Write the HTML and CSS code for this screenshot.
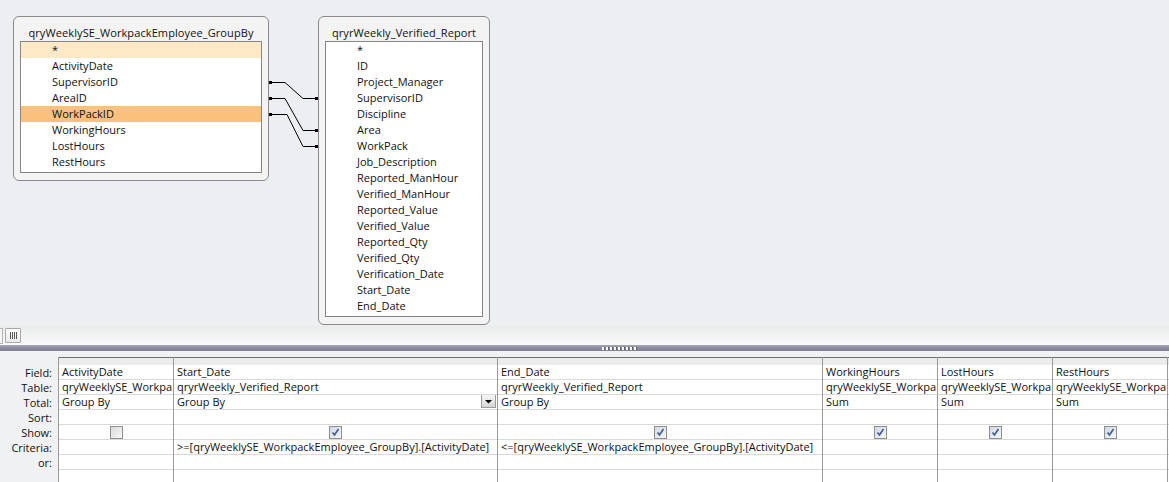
FILE: index.html
```html
<!DOCTYPE html>
<html lang="en">
<head>
    <meta charset="UTF-8">
    <title>Query Design</title>
    <link rel="stylesheet" href="styles.css">
</head>
<body>
    <div class="app">
        <!-- table diagram -->
        <div class="design">
            <div class="field-list left-list">
                <div class="list-title">qryWeeklySE_WorkpackEmployee_GroupBy</div>
                <ul class="fields">
                    <li class="star">*</li>
                    <li>ActivityDate</li>
                    <li>SupervisorID</li>
                    <li>AreaID</li>
                    <li class="selected">WorkPackID</li>
                    <li>WorkingHours</li>
                    <li>LostHours</li>
                    <li>RestHours</li>
                </ul>
            </div>

            <div class="field-list right-list">
                <div class="list-title">qryrWeekly_Verified_Report</div>
                <ul class="fields">
                    <li>*</li>
                    <li>ID</li>
                    <li>Project_Manager</li>
                    <li>SupervisorID</li>
                    <li>Discipline</li>
                    <li>Area</li>
                    <li>WorkPack</li>
                    <li>Job_Description</li>
                    <li>Reported_ManHour</li>
                    <li>Verified_ManHour</li>
                    <li>Reported_Value</li>
                    <li>Verified_Value</li>
                    <li>Reported_Qty</li>
                    <li>Verified_Qty</li>
                    <li>Verification_Date</li>
                    <li>Start_Date</li>
                    <li>End_Date</li>
                </ul>
            </div>

            <svg class="joins" width="1169" height="326" viewBox="0 0 1169 326">
                <g fill="none" stroke="#000" stroke-width="1">
                    <path d="M269 82.5 H285 L303 98.5 H318"/>
                    <path d="M269 98.5 H285 L303 130.5 H318"/>
                    <path d="M269 114.5 H287 L303 146.5 H318"/>
                </g>
                <g fill="#000">
                    <rect x="269" y="81" width="3" height="3"/>
                    <rect x="269" y="97" width="3" height="3"/>
                    <rect x="269" y="113" width="3" height="3"/>
                    <rect x="315" y="97" width="3" height="3"/>
                    <rect x="315" y="129" width="3" height="3"/>
                    <rect x="315" y="145" width="3" height="3"/>
                </g>
            </svg>
        </div>

        <div class="hscroll">
            <span class="stub"></span>
            <span class="thumb"><i></i><i></i><i></i><i></i></span>
        </div>

        <div class="splitter"><span class="grip"></span></div>

        <!-- design grid -->
        <div class="grid-pane">
            <div class="labels">
                <div class="head"></div>
                <div class="lbl">Field:</div>
                <div class="lbl">Table:</div>
                <div class="lbl">Total:</div>
                <div class="lbl">Sort:</div>
                <div class="lbl">Show:</div>
                <div class="lbl">Criteria:</div>
                <div class="lbl">or:</div>
            </div>

            <div class="col narrow">
                <div class="head"></div>
                <div class="cell">ActivityDate</div>
                <div class="cell">qryWeeklySE_Workpa</div>
                <div class="cell">Group By</div>
                <div class="cell"></div>
                <div class="cell show"><span class="check"></span></div>
                <div class="cell"></div>
                <div class="cell"></div>
            </div>

            <div class="col wide">
                <div class="head"></div>
                <div class="cell">Start_Date</div>
                <div class="cell">qryrWeekly_Verified_Report</div>
                <div class="cell total">Group By
                    <span class="drop"><svg width="7" height="5" viewBox="0 0 7 5"><path d="M0 1 H7 L3.5 4.5 Z" fill="#000"/></svg></span>
                </div>
                <div class="cell"></div>
                <div class="cell show"><span class="check on"><svg width="11" height="11" viewBox="0 0 11 11"><path d="M2.5 5.5 L4.5 8 L8.5 2" fill="none" stroke="#3b5a9a" stroke-width="1.6"/></svg></span></div>
                <div class="cell">&gt;=[qryWeeklySE_WorkpackEmployee_GroupBy].[ActivityDate]</div>
                <div class="cell"></div>
            </div>

            <div class="col wide">
                <div class="head"></div>
                <div class="cell">End_Date</div>
                <div class="cell">qryrWeekly_Verified_Report</div>
                <div class="cell">Group By</div>
                <div class="cell"></div>
                <div class="cell show"><span class="check on"><svg width="11" height="11" viewBox="0 0 11 11"><path d="M2.5 5.5 L4.5 8 L8.5 2" fill="none" stroke="#3b5a9a" stroke-width="1.6"/></svg></span></div>
                <div class="cell">&lt;=[qryWeeklySE_WorkpackEmployee_GroupBy].[ActivityDate]</div>
                <div class="cell"></div>
            </div>

            <div class="col narrow">
                <div class="head"></div>
                <div class="cell">WorkingHours</div>
                <div class="cell">qryWeeklySE_Workpa</div>
                <div class="cell">Sum</div>
                <div class="cell"></div>
                <div class="cell show"><span class="check on"><svg width="11" height="11" viewBox="0 0 11 11"><path d="M2.5 5.5 L4.5 8 L8.5 2" fill="none" stroke="#3b5a9a" stroke-width="1.6"/></svg></span></div>
                <div class="cell"></div>
                <div class="cell"></div>
            </div>

            <div class="col narrow">
                <div class="head"></div>
                <div class="cell">LostHours</div>
                <div class="cell">qryWeeklySE_Workpa</div>
                <div class="cell">Sum</div>
                <div class="cell"></div>
                <div class="cell show"><span class="check on"><svg width="11" height="11" viewBox="0 0 11 11"><path d="M2.5 5.5 L4.5 8 L8.5 2" fill="none" stroke="#3b5a9a" stroke-width="1.6"/></svg></span></div>
                <div class="cell"></div>
                <div class="cell"></div>
            </div>

            <div class="col narrow">
                <div class="head"></div>
                <div class="cell">RestHours</div>
                <div class="cell">qryWeeklySE_Workpa</div>
                <div class="cell">Sum</div>
                <div class="cell"></div>
                <div class="cell show"><span class="check on"><svg width="11" height="11" viewBox="0 0 11 11"><path d="M2.5 5.5 L4.5 8 L8.5 2" fill="none" stroke="#3b5a9a" stroke-width="1.6"/></svg></span></div>
                <div class="cell"></div>
                <div class="cell"></div>
            </div>

            <div class="col narrow">
                <div class="head"></div>
                <div class="cell"></div>
                <div class="cell"></div>
                <div class="cell"></div>
                <div class="cell"></div>
                <div class="cell"></div>
                <div class="cell"></div>
                <div class="cell"></div>
            </div>
        </div>
    </div>
</body>
</html>
```

FILE: styles.css
```css
body {
    margin: 0;
    padding: 0;
    font-family: "Open Sans", "Noto Sans", sans-serif;
    font-size: 11px;
    color: #111;
    background-color: #eceef1;
    overflow: hidden;
}

.app {
    width: 1169px;
    height: 482px;
    display: flex;
    flex-direction: column;
    overflow: hidden;
}

/* ---- design surface ---- */

.design {
    position: relative;
    height: 326px;
    flex-shrink: 0;
    background-color: #eceef1;
}

.field-list {
    position: absolute;
    top: 16px;
    box-sizing: border-box;
    border: 1px solid #8a8a8a;
    border-radius: 6px;
    background-color: #f3f3f4;
    padding: 0 6px 7px;
}

.left-list {
    left: 13px;
    width: 256px;
}

.right-list {
    left: 318px;
    width: 172px;
}

.list-title {
    height: 24px;
    line-height: 31px;
    text-align: center;
    white-space: nowrap;
    letter-spacing: 0.1px;
}

.fields {
    list-style: none;
    margin: 0;
    padding: 0 0 2px;
    border: 1px solid #868686;
    background-color: #fff;
}

.fields li {
    height: 16px;
    line-height: 16px;
    padding-left: 31px;
    white-space: nowrap;
}

.fields li.star {
    background-color: #fde9c6;
}

.fields li.selected {
    background-color: #fac17c;
}

.joins {
    position: absolute;
    left: 0;
    top: 0;
    pointer-events: none;
}

/* ---- scroll strip + splitter ---- */

.hscroll {
    height: 19px;
    flex-shrink: 0;
    display: flex;
    align-items: center;
    gap: 2px;
    background: linear-gradient(#eaebec, #f9f9f9);
}

.hscroll .stub {
    width: 2px;
    height: 14px;
    border: 1px solid #b4b4b4;
    border-left: none;
    background-color: #f4f4f4;
}

.hscroll .thumb {
    width: 14px;
    height: 13px;
    border: 1px solid #a9a9a9;
    border-radius: 1px;
    background: linear-gradient(#fdfdfd, #e9e9e9);
    display: flex;
    justify-content: center;
    align-items: center;
    gap: 1px;
}

.hscroll .thumb i {
    width: 1px;
    height: 7px;
    background-color: #555;
}

.splitter {
    height: 6px;
    flex-shrink: 0;
    background: linear-gradient(#a7a7ba, #8a8aa0 50%, #7f7f95);
    display: flex;
    justify-content: center;
    align-items: center;
}

.splitter .grip {
    width: 35px;
    height: 3px;
    margin-left: 70px;
    background-image: repeating-linear-gradient(90deg, #fff 0 2px, #5d5d70 2px 3px, transparent 3px 4px);
}

/* ---- design grid ---- */

.grid-pane {
    flex: 1;
    display: flex;
    padding-top: 6px;
    background-color: #f0f1f3;
    overflow: hidden;
}

.labels {
    width: 58px;
    flex-shrink: 0;
}

.labels .head {
    height: 8px;
}

.lbl {
    height: 15px;
    line-height: 15px;
    text-align: right;
    padding-right: 6px;
}

.col {
    flex-shrink: 0;
    box-sizing: border-box;
    border-left: 1px solid #9a9a9a;
    background-color: #fff;
}

.col.narrow {
    width: 115px;
}

.col.wide {
    width: 324px;
}

.col.wide + .col.wide {
    width: 325px;
}

.col .head {
    height: 8px;
    box-sizing: border-box;
    border-top: 1px solid #6f6f6f;
    background-color: #ececec;
}

.cell {
    height: 15px;
    line-height: 14px;
    box-sizing: border-box;
    border-bottom: 1px solid #dadada;
    padding-left: 3px;
    white-space: nowrap;
    overflow: hidden;
    position: relative;
}

.cell.show {
    display: flex;
    justify-content: center;
    align-items: center;
    padding-left: 0;
}

.check {
    width: 13px;
    height: 13px;
    box-sizing: border-box;
    border: 1px solid #8e8f8f;
    background: linear-gradient(135deg, #d9dadc, #f7f7f7);
    display: flex;
    justify-content: center;
    align-items: center;
}

.check.on {
    background: linear-gradient(135deg, #d4d8e0, #f4f6f9);
}

.drop {
    position: absolute;
    right: 1px;
    top: -1px;
    width: 15px;
    height: 14px;
    box-sizing: border-box;
    border: 1px solid #9c9c9c;
    background: linear-gradient(#f6f6f6, #d6d6d6);
    display: flex;
    justify-content: center;
    align-items: center;
}
```
